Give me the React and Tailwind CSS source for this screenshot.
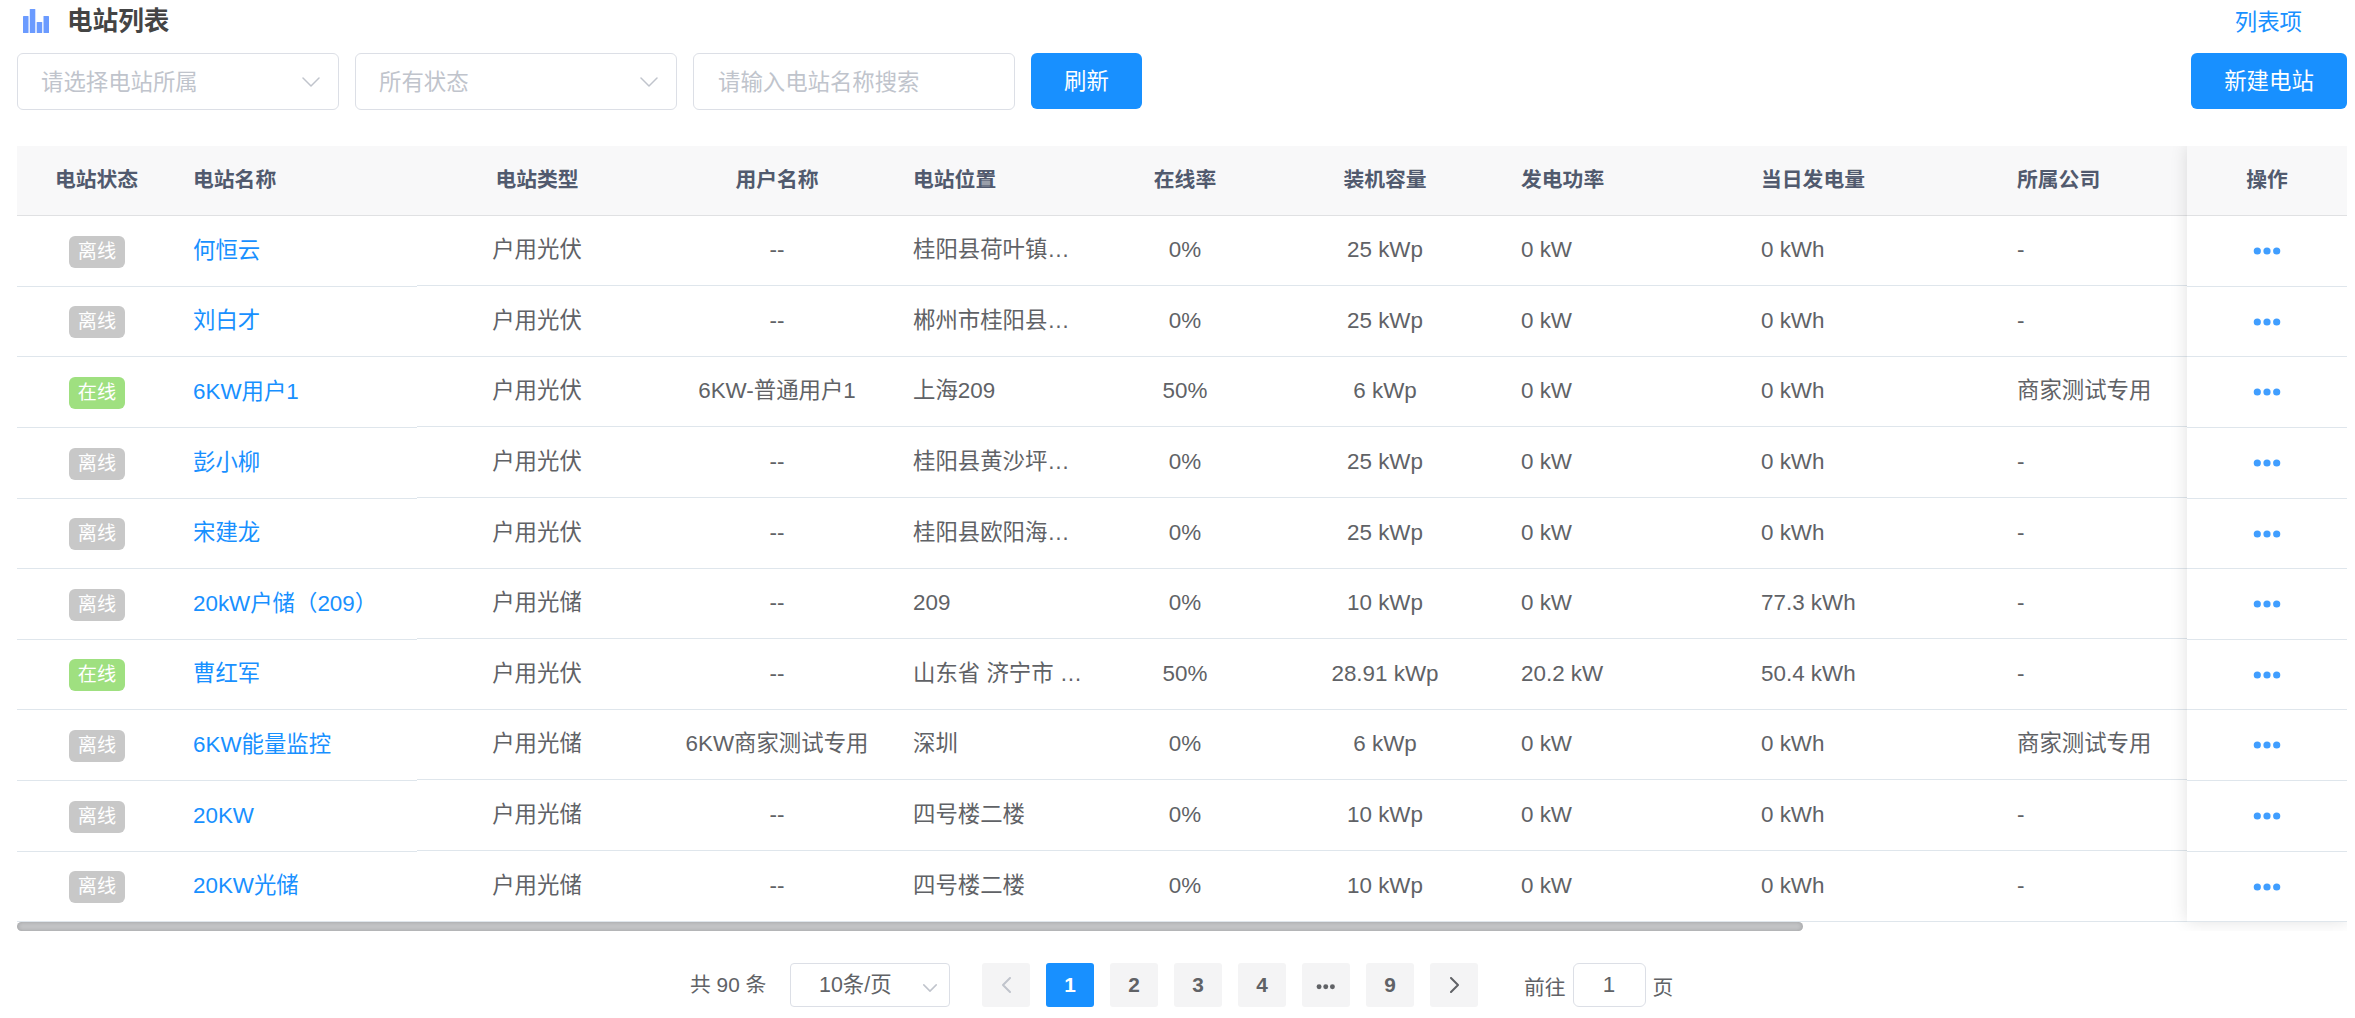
import React from "react";

const rows = [
  [0, "何恒云", "户用光伏", "--", "桂阳县荷叶镇…", "0%", "25 kWp", "0 kW", "0 kWh", "-"],
  [0, "刘白才", "户用光伏", "--", "郴州市桂阳县…", "0%", "25 kWp", "0 kW", "0 kWh", "-"],
  [1, "6KW用户1", "户用光伏", "6KW-普通用户1", "上海209", "50%", "6 kWp", "0 kW", "0 kWh", "商家测试专用"],
  [0, "彭小柳", "户用光伏", "--", "桂阳县黄沙坪…", "0%", "25 kWp", "0 kW", "0 kWh", "-"],
  [0, "宋建龙", "户用光伏", "--", "桂阳县欧阳海…", "0%", "25 kWp", "0 kW", "0 kWh", "-"],
  [0, "20kW户储（209）", "户用光储", "--", "209", "0%", "10 kWp", "0 kW", "77.3 kWh", "-"],
  [1, "曹红军", "户用光伏", "--", "山东省 济宁市 …", "50%", "28.91 kWp", "20.2 kW", "50.4 kWh", "-"],
  [0, "6KW能量监控", "户用光储", "6KW商家测试专用", "深圳", "0%", "6 kWp", "0 kW", "0 kWh", "商家测试专用"],
  [0, "20KW", "户用光储", "--", "四号楼二楼", "0%", "10 kWp", "0 kW", "0 kWh", "-"],
  [0, "20KW光储", "户用光储", "--", "四号楼二楼", "0%", "10 kWp", "0 kW", "0 kWh", "-"],
];

// Fractional row pitch lands the separators on alternating whole pixels.
const mainLines = [285, 356, 426, 497, 568, 638, 709, 779, 850, 921];
const sideLines = [286, 356, 427, 498, 568, 639, 709, 780, 851, 921];
const heightOf = (lines, i) => lines[i] - (i ? lines[i - 1] : 215);

const columns = [
  ["电站类型", "w-[240px] text-center"],
  ["用户名称", "w-[240px] text-center"],
  ["电站位置", "w-[208px] px-4"],
  ["在线率", "w-[160px] text-center"],
  ["装机容量", "w-[240px] text-center"],
  ["发电功率", "w-[240px] px-4"],
  ["当日发电量", "w-[256px] px-4"],
  ["所属公司", "w-[186px] px-4"],
];

const headClass =
  "flex h-[70px] items-center border-b border-[#e0e1e3] bg-[#f8f8f9] text-[20.8px] font-bold text-[#515a6e]";

function Chevron({ className, d = "M1 1l8 8 8-8", box = "0 0 18 10", width = 1.5 }) {
  return (
    <svg className={className} viewBox={box} fill="none" stroke="currentColor" strokeWidth={width} strokeLinecap="round" strokeLinejoin="round">
      <path d={d} />
    </svg>
  );
}

function Select({ text }) {
  return (
    <div className="flex h-[57px] w-[322px] items-center justify-between rounded-md border border-[#dcdfe6] pr-[18px] pl-[23px] text-[22.4px] text-[#c0c4cc]">
      <span className="pt-[3px]">{text}</span>
      <Chevron className="h-[10px] w-[18px]" />
    </div>
  );
}

function Dots({ className, r = 3.6, gap = 9.7 }) {
  return (
    <svg className={className} viewBox="0 0 28 8" fill="currentColor">
      <circle cx={14 - gap} cy="4" r={r} />
      <circle cx="14" cy="4" r={r} />
      <circle cx={14 + gap} cy="4" r={r} />
    </svg>
  );
}

function Page({ children, active }) {
  return (
    <div
      className={
        active
          ? "flex h-11 w-12 items-center justify-center rounded-[3px] bg-[#1890ff] font-bold text-white"
          : "flex h-11 w-12 items-center justify-center rounded-[3px] bg-[#f4f4f5] font-bold text-[#606266]"
      }
    >
      {children}
    </div>
  );
}

export default function App() {
  return (
    <div className="h-[1018px] w-[2355px] overflow-hidden bg-white font-['Liberation_Sans','Noto_Sans_CJK_SC',sans-serif] leading-none whitespace-nowrap text-[#606266]">
      <div className="flex h-[53px] items-start justify-between pr-[53px] pl-[23px]">
        <div className="flex items-start pt-[9px]">
          <svg className="h-6 w-[26px]" viewBox="0 0 26 24" fill="#6b9bff">
            <rect x="0" y="7" width="5.5" height="17" rx="0.6" />
            <rect x="6.8" y="0" width="5.5" height="24" rx="0.6" />
            <rect x="13.7" y="13" width="5.5" height="11" rx="0.6" />
            <rect x="20.5" y="7" width="5.5" height="17" rx="0.6" />
          </svg>
          <h1 className="ml-[18px] text-[25.6px] font-bold text-[#444]">电站列表</h1>
        </div>
        <a className="pt-[12px] text-[22.4px] text-[#1890ff]">列表项</a>
      </div>

      <div className="flex h-[93px] items-start justify-between pr-2 pl-[17px]">
        <div className="flex gap-4">
          <Select text="请选择电站所属" />
          <Select text="所有状态" />
          <div className="flex h-[57px] w-[322px] items-center rounded-md border border-[#dcdfe6] pt-[3px] pl-6 text-[22.4px] text-[#c0c4cc]">
            请输入电站名称搜索
          </div>
          <button className="h-14 w-[111px] rounded-md bg-[#1890ff] pt-[3px] text-[22.4px] text-white">刷新</button>
        </div>
        <button className="h-14 w-[156px] rounded-md bg-[#1890ff] pt-[3px] text-[22.4px] text-white">新建电站</button>
      </div>

      <div className="mr-2 ml-[17px] h-[785px] overflow-hidden">
        <div className="flex">
          <div className="w-[400px]">
            <div className={headClass}>
              <div className="w-[160px] pr-px text-center">电站状态</div>
              <div className="px-4">电站名称</div>
            </div>
            {rows.map((r, i) => (
              <div key={i} className="flex items-center border-b border-[#dfe6ec]" style={{ height: heightOf(sideLines, i) }}>
                <div className="flex w-[160px] justify-center pt-px">
                  <span
                    className={
                      r[0]
                        ? "flex h-8 w-14 items-center justify-center rounded-md bg-[#9fe080] text-[19.2px] text-white"
                        : "flex h-8 w-14 items-center justify-center rounded-md bg-[#c8c8c8] text-[19.2px] text-white"
                    }
                  >
                    {r[0] ? "在线" : "离线"}
                  </span>
                </div>
                <a className="px-4 text-[22.4px] text-[#1890ff]">{r[1]}</a>
              </div>
            ))}
          </div>
          <div className="w-[1770px]">
            <div className={headClass}>
              {columns.map(([t, c]) => (
                <div key={t} className={c}>{t}</div>
              ))}
            </div>
            {rows.map((r, i) => (
              <div key={i} className="flex items-center border-b border-[#dfe6ec] text-[22.4px]" style={{ height: heightOf(mainLines, i) }}>
                {columns.map(([t, c], j) => (
                  <div key={t} className={c}>{r[j + 2]}</div>
                ))}
              </div>
            ))}
          </div>
          <div className="h-[775px] w-[160px] bg-white shadow-[0_0_16px_rgba(0,0,0,0.13)]">
            <div className={headClass}>
              <div className="w-full text-center">操作</div>
            </div>
            {rows.map((r, i) => (
              <div key={i} className="flex items-center justify-center border-b border-[#dfe6ec]" style={{ height: heightOf(sideLines, i) }}>
                <Dots className="h-2 w-7 text-[#409eff]" />
              </div>
            ))}
          </div>
        </div>
        <div className="h-[9px] w-[1786px] rounded-full bg-[#c5c6c8] shadow-[inset_0_0_5px_rgba(0,0,0,0.2)]" />
      </div>

      <div className="flex pt-8 pl-[690px] text-[20.8px]">
        <div className="flex h-11 w-[100px] items-center">共 90 条</div>
        <div className="flex h-11 w-[160px] items-center justify-between rounded border border-[#dcdfe6] pr-3 pl-7">
          <span className="pt-0.5 text-[21.4px]">10条/页</span>
          <Chevron className="mt-1.5 h-2 w-[14px] text-[#c0c4cc]" width={1.9} />
        </div>
        <div className="ml-8 flex gap-4">
          <Page><Chevron className="h-4 w-[9px] text-[#c0c4cc]" box="0 0 9 16" d="M8 1L1 8l7 7" width={2} /></Page>
          <Page active>1</Page>
          <Page>2</Page>
          <Page>3</Page>
          <Page>4</Page>
          <Page><Dots className="mt-1 h-[5.5px] w-[19.5px]" /></Page>
          <Page>9</Page>
          <Page><Chevron className="h-4 w-[9px]" box="0 0 9 16" d="M1 1l7 7-7 7" width={2} /></Page>
        </div>
        <div className="ml-[46px] flex items-center">
          <span className="pt-1.5">前往</span>
          <span className="ml-[7px] flex h-11 w-[73px] items-center justify-center rounded-md border border-[#dcdfe6] text-[22.4px]">1</span>
          <span className="ml-[7px] pt-1.5">页</span>
        </div>
      </div>
    </div>
  );
}
